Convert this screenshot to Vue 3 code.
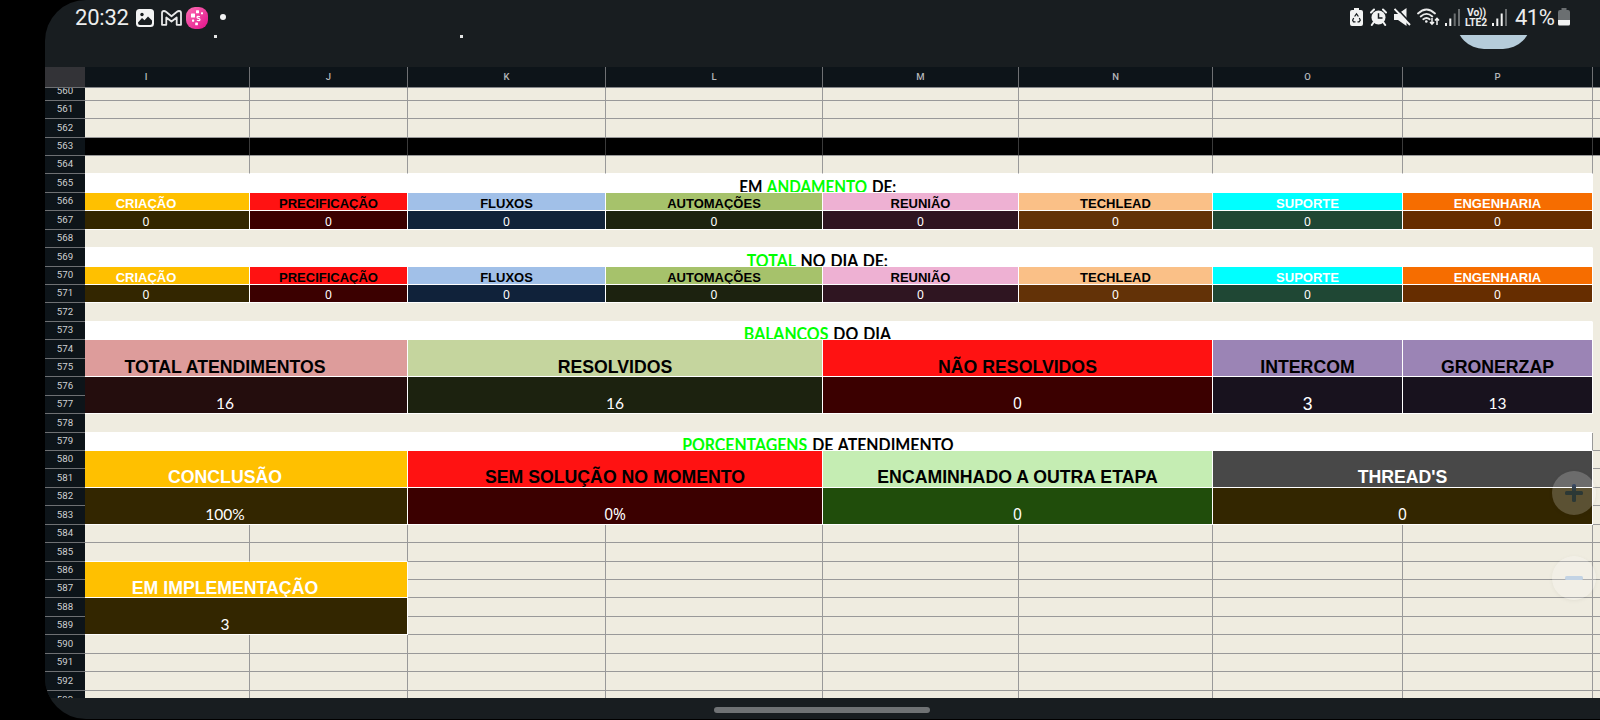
<script setup>
const columns = ['I', 'J', 'K', 'L', 'M', 'N', 'O', 'P', '']
const rows = Array.from({ length: 34 }, (_, i) => 560 + i)

const cells = []
function add(row, col, rowSpan, colSpan, kind, extra = {}) {
  cells.push({
    id: `${row}-${col}`,
    kind: col === 8 ? `${kind} last` : kind,
    area: `${row - 559} / ${col + 1} / span ${rowSpan} / span ${colSpan}`,
    ...extra,
  })
}

for (const row of rows) {
  for (let col = 0; col < 9; col++) {
    const plain = row <= 562 || row >= 590
    const open = row >= 584 && row <= 585
    const beside = row >= 586 && row <= 589 && col >= 2
    const margin = row >= 580 && row <= 583 && col === 8
    if (plain || open || beside || margin) {
      add(row, col, 1, 1, row === 585 && col < 2 ? 'blank under-white' : 'blank')
    } else if (row === 563) {
      add(row, col, 1, 1, 'black')
    } else if (row === 564) {
      add(row, col, 1, 1, col === 8 ? 'bare' : 'blank under-white')
    }
  }
}
for (const row of [568, 572, 578]) add(row, 0, 1, 8, 'bare under-white')
add(565, 8, 14, 1, 'bare')
add(579, 8, 1, 1, 'blank')

const titles = [
  [565, 'narrow', [['EM ', false], ['ANDAMENTO', true], [' DE:', false]]],
  [569, '', [['TOTAL', true], [' NO DIA DE:', false]]],
  [573, '', [['BALANCOS', true], [' DO DIA', false]]],
  [579, 'edge-gray', [['PORCENTAGENS', true], [' DE ATENDIMENTO', false]]],
]
for (const [row, variant, parts] of titles) {
  add(row, 0, 1, 8, `title ${variant}`, { parts })
}

const teams = [
  ['CRIAÇÃO', '#ffc000', '#fff', '#332600'],
  ['PRECIFICAÇÃO', '#ff1212', '#000', '#3b0000'],
  ['FLUXOS', '#a1c0e8', '#000', '#10223a'],
  ['AUTOMAÇÕES', '#a6c26b', '#000', '#1c220f'],
  ['REUNIÃO', '#eeb1d3', '#000', '#2f1521'],
  ['TECHLEAD', '#fac087', '#000', '#633207'],
  ['SUPORTE', '#00ffff', '#fff', '#1f4734'],
  ['ENGENHARIA', '#f66d00', '#fff', '#662d00'],
]
for (const row of [566, 570]) {
  teams.forEach(([text, background, color, dark], col) => {
    add(row, col, 1, 1, 'label', { text, background, color })
    add(row + 1, col, 1, 1, 'value oval', { text: '0', background: dark, color: '#fff' })
  })
}

const blocks = [
  [574, 0, 2, 'TOTAL ATENDIMENTOS', '16', '#dd9c9b', '#000', '#240d0d'],
  [574, 2, 2, 'RESOLVIDOS', '16', '#c5d59e', '#000', '#1c220f'],
  [574, 4, 2, 'NÃO RESOLVIDOS', '0', '#ff1212', '#000', '#3b0000'],
  [574, 6, 1, 'INTERCOM', '3', '#9b84b5', '#000', '#18121e'],
  [574, 7, 1, 'GRONERZAP', '13', '#9b84b5', '#000', '#18121e'],
  [580, 0, 2, 'CONCLUSÃO', '100%', '#ffc000', '#fff', '#332600'],
  [580, 2, 2, 'SEM SOLUÇÃO NO MOMENTO', '0%', '#ff1212', '#000', '#3b0000'],
  [580, 4, 2, 'ENCAMINHADO A OUTRA ETAPA', '0', '#c5edb3', '#000', '#204d0b'],
  [580, 6, 2, "THREAD'S", '0', '#484848', '#fff', '#332600'],
  [586, 0, 2, 'EM IMPLEMENTAÇÃO', '3', '#ffc000', '#fff', '#332600'],
]
for (const [row, col, span, text, value, background, color, dark] of blocks) {
  let kind = 'value big'
  if (text === 'INTERCOM') kind += ' plain-digit'
  else if (value.startsWith('0')) kind += ' oval'
  add(row, col, 2, span, row === 580 ? 'label big raised' : 'label big', { text, background, color })
  add(row + 2, col, 2, span, kind, { text: value, background: dark, color: '#fff' })
}
</script>

<template>
  <div class="device">
    <div class="screen">
      <header class="top">
        <div class="status">
          <span class="clock">20:32</span>
          <svg class="gallery" viewBox="0 0 18 18">
            <rect width="18" height="18" rx="3.5" fill="#f2f3f3" />
            <circle cx="6" cy="5.5" r="1.7" fill="#181d20" />
            <path d="M2 13.5 6 9l2.500 2.200L12 7.500l4 4V14q0 2-2 2H4q-2 0-2-2z" fill="#181d20" />
          </svg>
          <svg class="mail" viewBox="0 0 21 16">
            <path d="M1 14.800V3q0-2 2-2 1 0 2 .8l5.500 4.500L16 1.800Q17 1 18 1q2 0 2 2v11.800h-4.300V7.500L10.500 11.500 5.300 7.500v7.300z" fill="none" stroke="#e8e9e9" stroke-width="1.800" stroke-linejoin="round" />
          </svg>
          <svg class="app" viewBox="0 0 22 22">
            <defs>
              <linearGradient id="pink" x1="0" y1="0" x2="1" y2="1">
                <stop offset="0" stop-color="#ff6fb4" />
                <stop offset="1" stop-color="#e0108a" />
              </linearGradient>
            </defs>
            <rect width="22" height="22" rx="9" fill="url(#pink)" />
            <g fill="#fff">
              <rect x="5" y="6.500" width="4" height="4" rx=".6" />
              <rect x="10" y="3.300" width="3" height="3" rx=".5" />
              <rect x="15" y="5.300" width="2" height="2" rx=".4" />
              <rect x="6" y="12.500" width="2.200" height="2.200" rx=".4" />
              <rect x="9.200" y="15.500" width="2.700" height="2.700" rx=".5" />
            </g>
            <path d="M14 9.700q-3-1-3 .5 0 1 1.500 1.100 1.600.2 1.500 1.400-.2 1.500-3.200.6" fill="none" stroke="#fff" stroke-width="1.200" />
          </svg>
          <i class="more"></i>
          <div class="system">
            <svg class="saver" viewBox="0 0 13 18">
              <path d="M4 0h5v2h2q2 0 2 2v12q0 2-2 2H2q-2 0-2-2V4q0-2 2-2h2z" fill="#f2f3f3" />
              <path d="M4.600 8.500 6.500 5.800 8.400 8.500M9.300 10l1 2.200-1.200 1.600H7.500M5.500 13.800H3.500L2.600 12.200 3.700 10" fill="none" stroke="#181d20" stroke-width="1.200" />
            </svg>
            <svg class="alarm" viewBox="0 0 17 18">
              <circle cx="8.500" cy="9.500" r="7" fill="#f2f3f3" />
              <path d="M1 4.500 4 1.500M16 4.500 13 1.500M3.500 14.500 1.800 17M13.500 14.500l1.700 2.500" stroke="#f2f3f3" stroke-width="2" stroke-linecap="round" />
              <path d="M8.500 5.200V10h4" fill="none" stroke="#181d20" stroke-width="1.500" />
            </svg>
            <svg class="mute" viewBox="0 0 17 18">
              <path d="M0 6h4l8.500-6v18L4 12H0z" fill="#f2f3f3" />
              <path d="M1.500-1 17.500 16" stroke="#181d20" stroke-width="1.600" />
              <path d="M.500 1 16 17" stroke="#f2f3f3" stroke-width="1.900" />
            </svg>
            <svg class="wifi" viewBox="0 0 23 18">
              <g fill="none" stroke="#e8e9e9" stroke-width="1.800" stroke-linecap="round">
                <path d="M1 5.500Q9.500-2.500 18 5.500M3.700 8.500q5.800-5.300 11.600 0M6.300 11.300q3.200-2.600 6.400 0" />
              </g>
              <circle cx="9.300" cy="13.500" r="1.300" fill="#f2f3f3" />
              <path d="M15 10v6m-2-2 2 2.200L17 14M20 17v-6.500m-2 2 2-2.200 2 2.200" fill="none" stroke="#f2f3f3" stroke-width="1.500" />
            </svg>
            <svg class="signal" viewBox="0 0 15 17">
              <path d="M0 14h2v3H0zM4.300 9.500h2V17h-2z" fill="#f2f3f3" />
              <path d="M8.700 4.500h2V17h-2zM13 0h2v17h-2z" fill="#6b6f71" />
            </svg>
            <div class="volte"><span class="vo">Vo))</span><span class="lte">LTE2</span></div>
            <svg class="signal second" viewBox="0 0 15 17">
              <path d="M0 14h2v3H0zM4.300 9.500h2V17h-2zM8.700 4.500h2V17h-2z" fill="#f2f3f3" />
              <path d="M13 0h2v17h-2z" fill="#6b6f71" />
            </svg>
            <span class="percent">41%</span>
            <svg class="battery" viewBox="0 0 12 18">
              <path d="M3.500 0h5v2H10q2 0 2 2v8H0V4q0-2 2-2h1.500z" fill="#6b6f71" />
              <path d="M0 12h12V16q0 1.500-1.500 1.500h-9Q0 17.500 0 16z" fill="#f2f3f3" />
            </svg>
          </div>
        </div>
        <i class="speck first"></i>
        <i class="speck other"></i>
        <div class="avatar"><i></i></div>
      </header>

      <main class="sheet">
        <div class="corner"></div>
        <div class="col-heads">
          <div class="track columns">
            <span v-for="(name, i) in columns" :key="i" class="col-head">{{ name }}</span>
          </div>
        </div>
        <div class="row-heads track-rows">
          <span v-for="n in rows" :key="n" class="row-head">{{ n }}</span>
        </div>
        <div class="body">
          <div class="track columns track-rows">
            <div
              v-for="c in cells"
              :key="c.id"
              class="cell"
              :class="c.kind"
              :style="{ gridArea: c.area, backgroundColor: c.background, color: c.color }"
            >
              <span v-if="c.parts" class="words"><span v-for="(p, i) in c.parts" :key="i" :class="{ green: p[1] }">{{ p[0] }}</span></span>
              <span v-else-if="c.text" class="words">{{ c.text }}</span>
            </div>
          </div>
        </div>
        <div class="zoom zoom-in"><i></i><i class="upright"></i></div>
        <div class="zoom zoom-out"><i></i></div>
      </main>

      <footer class="nav"><i></i></footer>
    </div>
  </div>
</template>

<style>
body {
  margin: 0;
  background: #000;
}
</style>

<style scoped>
.device {
  box-sizing: border-box;
  width: 1600px;
  height: 720px;
  padding: 0 0 1px 45px;
  background: #000;
  overflow: hidden;
}
.screen {
  display: flex;
  flex-direction: column;
  height: 719px;
  background: #181d20;
  border-radius: 41px 0 0 41px;
  overflow: hidden;
}
.top {
  position: relative;
  flex: 0 0 67px;
}
.status {
  display: flex;
  align-items: flex-start;
  height: 35px;
  color: #eceded;
  font-family: Roboto, sans-serif;
}
.clock {
  width: 61px;
  margin-left: 30px;
  font-size: 22px;
  line-height: 35px;
  letter-spacing: -0.2px;
}
.gallery { width: 18px; height: 18px; margin-top: 9px; }
.mail { width: 21px; height: 16px; margin: 10px 0 0 7px; }
.app { width: 22px; height: 22px; margin: 7px 0 0 4px; }
.more {
  width: 6px;
  height: 6px;
  margin: 14px 0 0 12px;
  border-radius: 50%;
  background: #f2f3f3;
}
.system {
  display: flex;
  align-items: flex-start;
  margin-left: auto;
  margin-right: 30px;
}
.saver { width: 13px; height: 18px; margin-top: 8px; }
.alarm { width: 17px; height: 18px; margin: 8px 0 0 7px; }
.mute { width: 17px; height: 18px; margin: 8px 0 0 7px; }
.wifi { width: 23px; height: 18px; margin: 8px 0 0 6px; }
.signal { width: 15px; height: 17px; margin: 9px 0 0 5px; }
.signal.second { margin-left: 5px; }
.volte {
  display: flex;
  flex-direction: column;
  width: 22px;
  margin: 8px 0 0 5px;
  font-weight: 700;
  font-size: 10.3px;
  line-height: 9.5px;
  white-space: nowrap;
}
.vo { padding-left: 2px; letter-spacing: -0.1px; }
.lte { letter-spacing: -0.1px; }
.percent {
  width: 43px;
  margin-left: 8px;
  font-size: 22px;
  line-height: 35px;
  letter-spacing: -0.5px;
}
.battery { width: 12px; height: 18px; margin-top: 8px; }
.speck {
  position: absolute;
  top: 35px;
  width: 3px;
  height: 3px;
  background: #e4e5e5;
}
.speck.first { left: 169px; }
.speck.other { left: 415px; }
.avatar {
  position: absolute;
  top: 35px;
  left: 1411px;
  width: 75px;
  height: 14px;
  overflow: hidden;
}
.avatar i {
  display: block;
  height: 56px;
  margin-top: -42px;
  border-radius: 28px;
  background: #b5ccda;
}

.sheet {
  position: relative;
  display: grid;
  grid-template-columns: 40px 1515px;
  grid-template-rows: 21px 610px;
  height: 631px;
  overflow: hidden;
}
.corner {
  background: #333337;
  border-bottom: 1px solid #6e7073;
}
.col-heads,
.body {
  overflow: hidden;
}
.track {
  display: grid;
  width: 1557px;
  margin-left: -42px;
}
.columns {
  grid-template-columns: 207px 158px 198px 217px 196px 194px 190px 190px 7px;
}
.track-rows {
  grid-template-rows: 13px 18px 19px 18px 18px 19px 18px 19px 18px 19px 18px 18px 19px 18px 19px 18px 19px 18px 19px 18px 18px 19px 18px 19px 18px 19px 18px 18px 19px 18px 19px 18px 19px 19px;
}
.col-head {
  box-sizing: border-box;
  height: 21px;
  background: #0d1419;
  border-right: 1px solid #6e7073;
  border-bottom: 1px solid #85878a;
  color: #b4b7b9;
  font: 500 9.5px/20px Roboto, sans-serif;
  text-align: center;
}
.col-head:last-child {
  border-right: 0;
}
.row-heads {
  display: grid;
  overflow: hidden;
  background: #0d1419;
}
.row-head {
  display: flex;
  align-items: flex-end;
  justify-content: center;
  min-height: 0;
  overflow: hidden;
  border-bottom: 1px solid #6e7073;
  color: #cdd0d2;
  font: 400 9.7px/18.5px Roboto, sans-serif;
  letter-spacing: 0.1px;
}

.cell {
  display: flex;
  align-items: flex-end;
  justify-content: center;
  box-sizing: border-box;
  min-width: 0;
  min-height: 0;
  overflow: hidden;
  white-space: pre;
  background: #efece0;
  border-right: 1px solid #fff;
  border-bottom: 1px solid #fff;
}
.blank {
  border-color: #999;
}
.black {
  background: #000;
  border-right-color: #3a3a3a;
  border-bottom-color: #999;
}
.bare {
  border-color: #efece0;
}
.under-white {
  border-bottom-color: #fff;
}
.last {
  border-right: 0;
}
.title {
  background: #fff;
  color: #000;
  font: 700 16.7px/9.5px Lato, sans-serif;
  word-spacing: 1.2px;
}
.title .words {
  transform: scaleX(0.95);
}
.title.narrow .words {
  transform: scaleX(0.915);
}
.edge-gray {
  border-right-color: #999;
}
.green {
  color: #00ff00;
}
.label {
  font: 700 13px/13px "Liberation Sans", Arial, sans-serif;
}
.label.big {
  font-size: 17.7px;
  line-height: 18px;
}
.label.raised {
  padding-bottom: 1px;
}
.value {
  font: 400 12px/15px Lato, sans-serif;
}
.value.big {
  font-size: 15.5px;
  line-height: 20px;
}
.value.oval {
  font-family: "Noto Sans", sans-serif;
}
.value.plain-digit {
  font: 400 17.5px/18px "Liberation Sans", Arial, sans-serif;
}

.zoom {
  position: absolute;
  left: 1507px;
  width: 44px;
  height: 44px;
  border-radius: 50%;
  background: rgba(255, 255, 255, 0.2);
  box-shadow: 0 1px 4px rgba(0, 0, 0, 0.05);
}
.zoom-in { top: 404px; }
.zoom-out { top: 489px; }
.zoom i {
  position: absolute;
  top: 20px;
  left: 13px;
  width: 18px;
  height: 4px;
  border-radius: 1.5px;
  background: #2c3835;
}
.zoom i.upright {
  transform: rotate(90deg);
  background: linear-gradient(90deg, #3c4c6b, #2c3835 40%);
}
.zoom-out i {
  background: #c3d3e4;
}
.nav {
  display: flex;
  padding-top: 9px;
}
.nav i {
  width: 216px;
  height: 6px;
  margin-left: 669px;
  border-radius: 3px;
  background: #6f7274;
}
</style>
